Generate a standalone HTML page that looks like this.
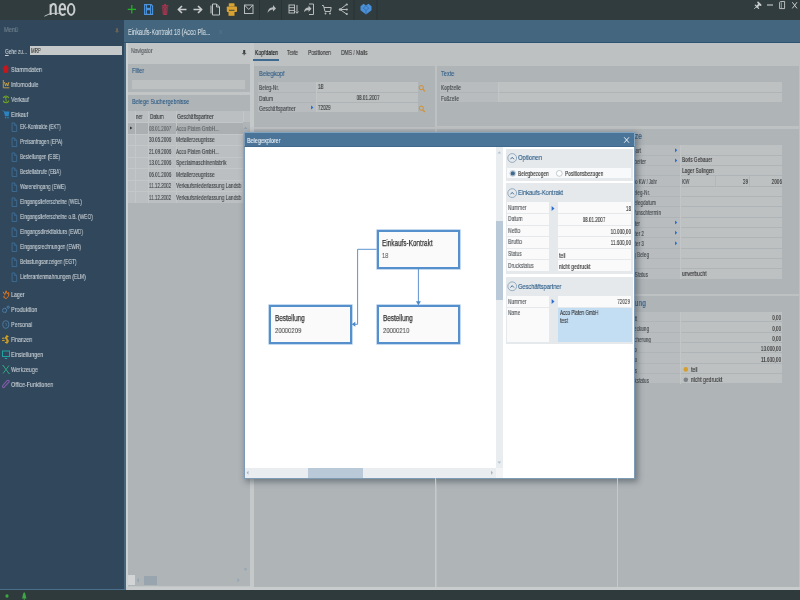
<!DOCTYPE html>
<html><head><meta charset="utf-8">
<style>
*{margin:0;padding:0;box-sizing:border-box}
html,body{width:800px;height:600px;overflow:hidden;background:#bec1c2;font-family:"Liberation Sans",sans-serif;font-size:7px;color:#333}
.a{position:absolute}
.t{position:absolute;white-space:nowrap;height:10px;will-change:transform;-webkit-text-stroke:0.15px currentColor}
svg{position:absolute;overflow:visible}
</style></head><body>
<div class="a" style="left:0px;top:0px;width:800px;height:20px;background:#313c3f;"></div>
<div class="a" style="left:0px;top:20px;width:124px;height:570px;background:#31485c;"></div>
<div class="a" style="left:124px;top:20px;width:676px;height:23px;background:#44677f;"></div>
<div class="a" style="left:124px;top:43px;width:2px;height:546px;background:#44677f;"></div>
<div class="a" style="left:126px;top:43px;width:1.5px;height:544px;background:#cdd0d1;"></div>
<div class="a" style="left:124px;top:42.2px;width:676px;height:1px;background:#2d5272;"></div>
<div class="a" style="left:0px;top:588.7px;width:126px;height:1.3px;background:#4a6f8c;"></div>
<div class="a" style="left:126px;top:586.5px;width:674px;height:3.5px;background:#c9cccd;"></div>
<div class="a" style="left:0px;top:590px;width:800px;height:10px;background:#2f3a3d;"></div>
<svg style="left:0;top:0" width="800" height="600"><g fill="none" stroke="#c9cdcd" stroke-width="2">
<path d="M50.6 15 V4.2 M50.6 7.5 Q51.5 4 53.5 4 Q55.8 4 55.8 7 V15"/>
<path d="M59.6 9.3 H65.2 Q65.2 4 62.4 4 Q59.6 4 59.6 9.5 Q59.6 15 62.6 15 Q64.4 15 65.2 13.6"/>
<ellipse cx="71.1" cy="9.5" rx="3.3" ry="5.4"/>
</g>
<path d="M44.5 16.2 Q50 12.5 56 13.2 Q59 13.6 61.5 13" fill="none" stroke="#c9cdcd" stroke-width="0.9"/></svg>
<svg style="left:0;top:0" width="800" height="600"><g stroke="#22b522" stroke-width="1.2"><path d="M127.7 9.3H136M131.8 5V13.6"/></g>
<g fill="none" stroke="#4d93dc" stroke-width="1.1"><path d="M144.6 4.6H151.2L152.6 6V14.4H144.6Z"/><path d="M146.4 4.6V8.4H150.6V4.6M146.4 14.4V9.6H150.6V14.4"/></g>
<rect x="148.6" y="5.2" width="1" height="2.4" fill="#2a3236"/>
<g fill="none" stroke="#b03550" stroke-width="1"><path d="M162.8 7.2H167.2L166.7 14.5H163.3Z"/><path d="M164.3 8V14M165.7 8V14"/></g>
<g fill="#b03550"><rect x="161.8" y="5.2" width="6.6" height="1.3" rx="0.5"/><rect x="164.2" y="3.9" width="1.8" height="1.6"/></g>
<g fill="none" stroke="#c8cccc" stroke-width="1.7" stroke-linejoin="round"><path d="M186.5 9.5H178.5M182 6L178.3 9.5L182 13"/><path d="M193.5 9.5H201.5M198 6L201.7 9.5L198 13"/></g>
<g fill="none" stroke="#c0c4c4" stroke-width="1"><path d="M212.5 4H216.5L219.5 7V15H212.5Z"/><path d="M211 5.5V13.5"/><path d="M216.5 4V7H219.5"/></g>
<g fill="#d8a332"><rect x="228.8" y="3.2" width="5.7" height="3.3" rx="0.6"/><rect x="226.8" y="6.5" width="10.2" height="5.5" rx="0.8"/><rect x="228.5" y="11.8" width="6" height="4"/></g>
<rect x="229" y="9.8" width="5.5" height="0.9" fill="#313c3f"/>
<g fill="none" stroke="#b8bcbc" stroke-width="1"><rect x="244.5" y="5" width="8.5" height="8.5"/><path d="M244.5 5L248.75 9.5L253 5"/></g>
<rect x="259" y="0" width="1" height="20" fill="#2a3335"/>
<path d="M267.5 13Q268 7.5 273 7.2V5L276 8.5L273 11.5V9.5Q269.5 9.5 267.5 13Z" fill="#b8bcbc"/>
<rect x="281" y="0" width="1" height="20" fill="#2a3335"/>
<g fill="none" stroke="#b8bcbc" stroke-width="1"><rect x="289" y="5" width="5.5" height="8"/><path d="M289 7.7H294.5M289 10.4H294.5"/><path d="M297 5V13M295.5 11.5L297 13.3L298.5 11.5"/></g>
<g fill="none" stroke="#b8bcbc" stroke-width="1"><path d="M309 4H313.5V14.5H309"/></g>
<path d="M304 12Q304.5 7.5 308.5 7.5V5.5L311.5 8.8L308.5 12V10Q305.8 10 304 12Z" fill="#b8bcbc"/>
<g fill="none" stroke="#b8bcbc" stroke-width="1"><path d="M322 5.5H323.5L325 11.5H330.5L331.2 7.5H324"/></g><circle cx="325.5" cy="13.5" r="0.9" fill="#b8bcbc"/><circle cx="330" cy="13.5" r="0.9" fill="#b8bcbc"/>
<g fill="none" stroke="#b8bcbc" stroke-width="1"><path d="M340 9.5L346.5 4.5M340 9.5H346.5M340 9.5L346.5 14"/></g><circle cx="340" cy="9.5" r="1.2" fill="#b8bcbc"/><circle cx="346.8" cy="4.5" r="1.1" fill="#b8bcbc"/><circle cx="346.8" cy="9.5" r="1.1" fill="#b8bcbc"/><circle cx="346.8" cy="14" r="1.1" fill="#b8bcbc"/>
<rect x="353.5" y="0" width="1" height="20" fill="#2a3335"/>
<path d="M360.5 6.3L363.5 3.7L366 5.6L368.5 3.7L371.5 6.3V10.2L366 14.6L360.5 10.2Z" fill="#4a90d8"/>
<path d="M363.2 8.2L366 10.3L368.8 8.2M366 10.3V14.2M366 5.6L363.2 8.2M366 5.6L368.8 8.2" fill="none" stroke="#2d6296" stroke-width="0.6"/>
<rect x="376.5" y="0" width="1" height="20" fill="#2a3335"/>
<g fill="none" stroke="#c8cccc" stroke-linecap="round"><path d="M754.4 8.7L756.7 6.4" stroke-width="0.8"/><path d="M755.3 5.1L758.6 8.4" stroke-width="1.2"/><path d="M756.9 6.7L759.3 4.3" stroke-width="2"/><path d="M758 2.4L760.7 5.1" stroke-width="1.6"/></g>
<g fill="none" stroke="#c8cccc"><path d="M767 5H773" stroke-width="1.1"/><path d="M779.6 2.6Q779.6 1.8 780.6 1.6L784.6 1.4V8.6H779.6Z" stroke-width="0.9"/><path d="M781.4 2.4V8" stroke-width="0.6"/><path d="M792.3 2.2L797 8.4M797 2.2L792.3 8.4" stroke-width="1"/></g></svg>
<div class="t" style="left:3.90px;top:24.80px;font-size:7.5px;color:#6f808e;line-height:10px;transform:scaleX(0.746);transform-origin:left;">Menü</div>
<svg style="left:0;top:0" width="800" height="600"><rect x="116.2" y="28.2" width="1.6" height="3" fill="#7a6a55"/><path d="M115.2 31.4H118.8M117 31.4V33" stroke="#7a6a55" stroke-width="0.7"/></svg>
<div class="t" style="left:4.90px;top:46.50px;font-size:7px;color:#c2c9cf;line-height:10px;transform:scaleX(0.678);transform-origin:left;"><u style="text-decoration-thickness:0.5px;text-underline-offset:1px">G</u>ehe zu...</div>
<div class="a" style="left:29.5px;top:45.5px;width:92px;height:9.8px;background:#c6c9c9;"></div>
<div class="t" style="left:30.50px;top:45.60px;font-size:6.5px;color:#3a3a3a;line-height:10px;transform:scaleX(0.678);transform-origin:left;">MRP</div>
<div class="t" style="left:11.00px;top:64.50px;font-size:7px;color:#c2c9cf;line-height:10px;transform:scaleX(0.781);transform-origin:left;">Stammdaten</div>
<div class="t" style="left:11.00px;top:79.50px;font-size:7px;color:#c2c9cf;line-height:10px;transform:scaleX(0.794);transform-origin:left;">Infomodule</div>
<div class="t" style="left:11.00px;top:94.50px;font-size:7px;color:#c2c9cf;line-height:10px;transform:scaleX(0.758);transform-origin:left;">Verkauf</div>
<div class="t" style="left:11.00px;top:109.50px;font-size:7px;color:#c2c9cf;line-height:10px;transform:scaleX(0.728);transform-origin:left;">Einkauf</div>
<div class="t" style="left:19.60px;top:121.50px;font-size:7px;color:#c2c9cf;line-height:10px;transform:scaleX(0.660);transform-origin:left;">EK-Kontrakte (EKT)</div>
<div class="t" style="left:19.60px;top:136.50px;font-size:7px;color:#c2c9cf;line-height:10px;transform:scaleX(0.667);transform-origin:left;">Preisanfragen (EPA)</div>
<div class="t" style="left:19.60px;top:151.50px;font-size:7px;color:#c2c9cf;line-height:10px;transform:scaleX(0.655);transform-origin:left;">Bestellungen (EBE)</div>
<div class="t" style="left:19.60px;top:166.50px;font-size:7px;color:#c2c9cf;line-height:10px;transform:scaleX(0.664);transform-origin:left;">Bestellabrufe (EBA)</div>
<div class="t" style="left:19.60px;top:181.50px;font-size:7px;color:#c2c9cf;line-height:10px;transform:scaleX(0.675);transform-origin:left;">Wareneingang (EWE)</div>
<div class="t" style="left:19.60px;top:196.50px;font-size:7px;color:#c2c9cf;line-height:10px;transform:scaleX(0.685);transform-origin:left;">Eingangslieferscheine (WEL)</div>
<div class="t" style="left:19.60px;top:211.50px;font-size:7px;color:#c2c9cf;line-height:10px;transform:scaleX(0.685);transform-origin:left;">Eingangslieferscheine o.B. (WEO)</div>
<div class="t" style="left:19.60px;top:226.50px;font-size:7px;color:#c2c9cf;line-height:10px;transform:scaleX(0.695);transform-origin:left;">Eingangsdirektfaktura (EWD)</div>
<div class="t" style="left:19.60px;top:241.50px;font-size:7px;color:#c2c9cf;line-height:10px;transform:scaleX(0.685);transform-origin:left;">Eingangsrechnungen (EWR)</div>
<div class="t" style="left:19.60px;top:256.50px;font-size:7px;color:#c2c9cf;line-height:10px;transform:scaleX(0.671);transform-origin:left;">Belastungsanzeigen (EGT)</div>
<div class="t" style="left:19.60px;top:271.50px;font-size:7px;color:#c2c9cf;line-height:10px;transform:scaleX(0.707);transform-origin:left;">Lieferantenmahnungen (ELM)</div>
<div class="t" style="left:11.00px;top:289.50px;font-size:7px;color:#c2c9cf;line-height:10px;transform:scaleX(0.754);transform-origin:left;">Lager</div>
<div class="t" style="left:11.00px;top:304.50px;font-size:7px;color:#c2c9cf;line-height:10px;transform:scaleX(0.789);transform-origin:left;">Produktion</div>
<div class="t" style="left:11.00px;top:319.50px;font-size:7px;color:#c2c9cf;line-height:10px;transform:scaleX(0.760);transform-origin:left;">Personal</div>
<div class="t" style="left:11.00px;top:334.50px;font-size:7px;color:#c2c9cf;line-height:10px;transform:scaleX(0.729);transform-origin:left;">Finanzen</div>
<div class="t" style="left:11.00px;top:349.50px;font-size:7px;color:#c2c9cf;line-height:10px;transform:scaleX(0.761);transform-origin:left;">Einstellungen</div>
<div class="t" style="left:11.00px;top:364.50px;font-size:7px;color:#c2c9cf;line-height:10px;transform:scaleX(0.760);transform-origin:left;">Werkzeuge</div>
<div class="t" style="left:11.00px;top:379.50px;font-size:7px;color:#c2c9cf;line-height:10px;transform:scaleX(0.766);transform-origin:left;">Office-Funktionen</div>
<svg style="left:0;top:0" width="800" height="600"><path d="M5.8 64.5L2.3 68.5H3.5V72.8H8.2V68.5H9.3Z" fill="#c4161c"/>
<g fill="none" stroke="#c9a246" stroke-width="0.9"><path d="M3.3 80V87.8H9.3"/><path d="M4.5 82L5.6 86L6.7 83L7.8 86L8.9 82"/></g>
<g fill="none" stroke="#74a524" stroke-width="1.1"><path d="M3.2 98.2A2.9 2.9 0 0 1 8.8 98.2"/><path d="M3.2 100.6A2.9 2.9 0 0 0 8.8 100.6"/><path d="M4.5 97.3H7.3M5.6 97.3L6.3 101.6" stroke-width="0.9"/></g>
<path d="M2.8 110.3L4.4 112" stroke="#2a84c4" stroke-width="0.9"/><path d="M3.9 111.6H9.3L8.6 116.2H5Z" fill="#2a84c4"/><circle cx="5.6" cy="117.8" r="0.8" fill="#2a84c4"/><circle cx="8" cy="117.8" r="0.8" fill="#2a84c4"/>
<path d="M12.1 122.9H14.4L16.7 125.5V131.5H12.1Z" fill="none" stroke="#3f6f98" stroke-width="0.85"/><path d="M14.4 122.9V125.5H16.7" fill="none" stroke="#3f6f98" stroke-width="0.7"/><path d="M12.1 137.9H14.4L16.7 140.5V146.5H12.1Z" fill="none" stroke="#3f6f98" stroke-width="0.85"/><path d="M14.4 137.9V140.5H16.7" fill="none" stroke="#3f6f98" stroke-width="0.7"/><path d="M12.1 152.9H14.4L16.7 155.5V161.5H12.1Z" fill="none" stroke="#3f6f98" stroke-width="0.85"/><path d="M14.4 152.9V155.5H16.7" fill="none" stroke="#3f6f98" stroke-width="0.7"/><path d="M12.1 167.9H14.4L16.7 170.5V176.5H12.1Z" fill="none" stroke="#3f6f98" stroke-width="0.85"/><path d="M14.4 167.9V170.5H16.7" fill="none" stroke="#3f6f98" stroke-width="0.7"/><path d="M12.1 182.9H14.4L16.7 185.5V191.5H12.1Z" fill="none" stroke="#3f6f98" stroke-width="0.85"/><path d="M14.4 182.9V185.5H16.7" fill="none" stroke="#3f6f98" stroke-width="0.7"/><path d="M12.1 197.9H14.4L16.7 200.5V206.5H12.1Z" fill="none" stroke="#3f6f98" stroke-width="0.85"/><path d="M14.4 197.9V200.5H16.7" fill="none" stroke="#3f6f98" stroke-width="0.7"/><path d="M12.1 212.9H14.4L16.7 215.5V221.5H12.1Z" fill="none" stroke="#3f6f98" stroke-width="0.85"/><path d="M14.4 212.9V215.5H16.7" fill="none" stroke="#3f6f98" stroke-width="0.7"/><path d="M12.1 227.9H14.4L16.7 230.5V236.5H12.1Z" fill="none" stroke="#3f6f98" stroke-width="0.85"/><path d="M14.4 227.9V230.5H16.7" fill="none" stroke="#3f6f98" stroke-width="0.7"/><path d="M12.1 242.9H14.4L16.7 245.5V251.5H12.1Z" fill="none" stroke="#3f6f98" stroke-width="0.85"/><path d="M14.4 242.9V245.5H16.7" fill="none" stroke="#3f6f98" stroke-width="0.7"/><path d="M12.1 257.9H14.4L16.7 260.5V266.5H12.1Z" fill="none" stroke="#3f6f98" stroke-width="0.85"/><path d="M14.4 257.9V260.5H16.7" fill="none" stroke="#3f6f98" stroke-width="0.7"/><path d="M12.1 272.9H14.4L16.7 275.5V281.5H12.1Z" fill="none" stroke="#3f6f98" stroke-width="0.85"/><path d="M14.4 272.9V275.5H16.7" fill="none" stroke="#3f6f98" stroke-width="0.7"/>
<g fill="none" stroke="#e0741c" stroke-width="1" stroke-linejoin="round"><path d="M3 291.8L4.8 294.6L6.2 290.8L7.2 293.8L8.8 292.5L8.6 296.2L6 298.6L3.6 297.2L4.6 295.6"/></g>
<g fill="none" stroke="#4f84b4" stroke-width="1.1" stroke-dasharray="1 0.45"><circle cx="4.6" cy="310.4" r="2"/></g><g fill="none" stroke="#4f84b4" stroke-width="0.9"><circle cx="8.2" cy="307.2" r="1.1"/></g>
<ellipse cx="5.8" cy="324.5" rx="3.1" ry="3.9" fill="none" stroke="#4e7ca4" stroke-width="0.9"/><path d="M5.3 323.5H6.3V326" fill="none" stroke="#4e7ca4" stroke-width="0.6"/>
<g fill="none" stroke="#d9a322" stroke-width="1.1"><path d="M8.5 336.5Q6.8 335.8 5.8 337Q5 338.3 6.8 339.3Q8.8 340.4 8 341.8Q7 343 5 342.3M6.9 335V343.8"/><path d="M2.2 338.5Q3.5 337.5 4.5 338.5M2.2 340.8Q3.5 339.8 4.5 340.8"/></g>
<g fill="none" stroke="#22a3a3" stroke-width="1"><rect x="2.5" y="351" width="7" height="5.5"/><path d="M4.8 358.5H7.2"/></g>
<g fill="none" stroke="#2ea382" stroke-width="1"><path d="M3 365.5L9 373.5M9 365.5L3 373.5M2.5 365L4 366.5M8.2 372.5L9.6 374"/></g>
<path d="M3.5 387.8L8.5 382.5Q9.8 381.2 8.8 380.5Q7.8 379.8 6.8 380.9L2.9 385.3Q2 386.5 2.8 387.3Q3.6 388 4.6 387" fill="none" stroke="#7d5ba6" stroke-width="1.1"/></svg>
<div class="t" style="left:127.75px;top:26.50px;font-size:8.5px;color:#cdd6dd;line-height:10px;transform:scaleX(0.661);transform-origin:left;">Einkaufs-Kontrakt 18 (Acco Pla...</div>
<div class="t" style="left:218.80px;top:27.00px;font-size:6.5px;color:#55758f;line-height:10px;">x</div>
<div class="a" style="left:127.5px;top:43px;width:122px;height:544px;background:#c2c5c6;"></div>
<div class="t" style="left:130.75px;top:45.80px;font-size:7px;color:#5a5f63;line-height:10px;transform:scaleX(0.717);transform-origin:left;">Navigator</div>
<svg style="left:0;top:0" width="800" height="600"><rect x="243.2" y="50" width="2" height="3.4" fill="#3a3e41"/><path d="M242.2 53.6H246.2M244.2 53.6V55.3" stroke="#3a3e41" stroke-width="0.8"/></svg>
<div class="a" style="left:127.5px;top:64px;width:122px;height:27.5px;background:#afb4b7;"></div>
<div class="t" style="left:132.00px;top:65.80px;font-size:7.5px;color:#2f5d86;line-height:10px;transform:scaleX(0.720);transform-origin:left;">Filter</div>
<div class="a" style="left:131.8px;top:79.8px;width:113.5px;height:9.2px;background:#bec1c2;"></div>
<div class="a" style="left:127.5px;top:95px;width:122px;height:491px;background:#afb4b7;"></div>
<div class="t" style="left:131.80px;top:97.00px;font-size:7.5px;color:#2f5d86;line-height:10px;transform:scaleX(0.722);transform-origin:left;">Belege Suchergebnisse</div>
<div class="a" style="left:127.5px;top:111px;width:122px;height:11px;background:#bcbfc1;"></div>
<div class="a" style="left:127.5px;top:122px;width:115px;height:80.5px;background:#bcbfc1;"></div>
<div class="a" style="left:127.5px;top:122px;width:115px;height:11.5px;background:#abafb1;"></div>
<div class="a" style="left:134.5px;top:111px;width:1px;height:91.5px;background:#c4c7c8;"></div>
<div class="a" style="left:147.5px;top:111px;width:1px;height:91.5px;background:#c4c7c8;"></div>
<div class="a" style="left:175.5px;top:111px;width:1px;height:91.5px;background:#c4c7c8;"></div>
<div class="a" style="left:242.5px;top:111px;width:1px;height:11px;background:#c4c7c8;"></div>
<div class="a" style="left:127.5px;top:122.0px;width:115px;height:0.8px;background:#c4c7c8;"></div>
<div class="a" style="left:127.5px;top:133.5px;width:115px;height:0.8px;background:#c4c7c8;"></div>
<div class="a" style="left:127.5px;top:145.0px;width:115px;height:0.8px;background:#c4c7c8;"></div>
<div class="a" style="left:127.5px;top:156.5px;width:115px;height:0.8px;background:#c4c7c8;"></div>
<div class="a" style="left:127.5px;top:168.0px;width:115px;height:0.8px;background:#c4c7c8;"></div>
<div class="a" style="left:127.5px;top:179.5px;width:115px;height:0.8px;background:#c4c7c8;"></div>
<div class="a" style="left:127.5px;top:191.0px;width:115px;height:0.8px;background:#c4c7c8;"></div>
<div class="t" style="left:135.50px;top:112.30px;font-size:6.5px;color:#3a3d40;line-height:10px;transform:scaleX(0.691);transform-origin:left;">ner</div>
<div class="t" style="left:149.80px;top:112.30px;font-size:6.5px;color:#3a3d40;line-height:10px;transform:scaleX(0.715);transform-origin:left;">Datum</div>
<div class="t" style="left:176.80px;top:112.30px;font-size:6.5px;color:#3a3d40;line-height:10px;transform:scaleX(0.734);transform-origin:left;">Geschäftspartner</div>
<svg style="left:0;top:0" width="800" height="600"><path d="M130 126.5L132.5 128L130 129.5Z" fill="#333"/><path d="M243.8 129L245.5 126.8L247.2 129Z" fill="#8fa2b2"/></svg>
<div class="t" style="left:148.80px;top:123.60px;font-size:6.5px;color:#62676a;line-height:10px;transform:scaleX(0.682);transform-origin:left;">08.01.2007</div>
<div class="t" style="left:176.30px;top:123.60px;font-size:6.5px;color:#62676a;line-height:10px;transform:scaleX(0.707);transform-origin:left;">Acco Platen GmbH...</div>
<div class="t" style="left:148.80px;top:135.10px;font-size:6.5px;color:#45494c;line-height:10px;transform:scaleX(0.682);transform-origin:left;">30.05.2006</div>
<div class="t" style="left:176.30px;top:135.10px;font-size:6.5px;color:#45494c;line-height:10px;transform:scaleX(0.739);transform-origin:left;">Metallerzeugnisse</div>
<div class="t" style="left:148.80px;top:146.60px;font-size:6.5px;color:#45494c;line-height:10px;transform:scaleX(0.682);transform-origin:left;">21.09.2006</div>
<div class="t" style="left:176.30px;top:146.60px;font-size:6.5px;color:#45494c;line-height:10px;transform:scaleX(0.707);transform-origin:left;">Acco Platen GmbH...</div>
<div class="t" style="left:148.80px;top:158.10px;font-size:6.5px;color:#45494c;line-height:10px;transform:scaleX(0.682);transform-origin:left;">13.01.2006</div>
<div class="t" style="left:176.30px;top:158.10px;font-size:6.5px;color:#45494c;line-height:10px;transform:scaleX(0.733);transform-origin:left;">Spezialmaschinenfabrik</div>
<div class="t" style="left:148.80px;top:169.60px;font-size:6.5px;color:#45494c;line-height:10px;transform:scaleX(0.682);transform-origin:left;">06.01.2006</div>
<div class="t" style="left:176.30px;top:169.60px;font-size:6.5px;color:#45494c;line-height:10px;transform:scaleX(0.739);transform-origin:left;">Metallerzeugnisse</div>
<div class="t" style="left:148.80px;top:181.10px;font-size:6.5px;color:#45494c;line-height:10px;transform:scaleX(0.692);transform-origin:left;">11.12.2002</div>
<div class="t" style="left:176.30px;top:181.10px;font-size:6.5px;color:#45494c;line-height:10px;transform:scaleX(0.734);transform-origin:left;">Verkaufsniederlassung Landsb</div>
<div class="t" style="left:148.80px;top:192.60px;font-size:6.5px;color:#45494c;line-height:10px;transform:scaleX(0.692);transform-origin:left;">11.12.2002</div>
<div class="t" style="left:176.30px;top:192.60px;font-size:6.5px;color:#45494c;line-height:10px;transform:scaleX(0.734);transform-origin:left;">Verkaufsniederlassung Landsb</div>
<svg style="left:0;top:0" width="800" height="600"><path d="M243.8 568.5L245.5 570.8L247.2 568.5Z" fill="#8fa2b2"/><path d="M138.8 578L137 580.3L138.8 582.6Z" fill="#8fa2b2"/><path d="M237.5 578L239.3 580.3L237.5 582.6Z" fill="#8fa2b2"/></svg>
<div class="a" style="left:127.5px;top:575px;width:7px;height:10px;background:#d2d5d6;"></div>
<div class="a" style="left:144px;top:576px;width:12.8px;height:8.5px;background:#99a5ae;"></div>
<div class="a" style="left:249.5px;top:43px;width:4.5px;height:544px;background:#c6c9ca;"></div>
<div class="t" style="left:254.60px;top:47.50px;font-size:7px;color:#1e2224;line-height:10px;transform:scaleX(0.724);transform-origin:left;-webkit-text-stroke:0.2px #1e2224;">Kopfdaten</div>
<div class="a" style="left:253px;top:59.2px;width:26px;height:1.8px;background:#3e6a90;"></div>
<div class="t" style="left:287.00px;top:47.50px;font-size:7px;color:#3a3a3a;line-height:10px;transform:scaleX(0.657);transform-origin:left;">Texte</div>
<div class="t" style="left:308.00px;top:47.50px;font-size:7px;color:#3a3a3a;line-height:10px;transform:scaleX(0.703);transform-origin:left;">Positionen</div>
<div class="t" style="left:341.00px;top:47.50px;font-size:7px;color:#3a3a3a;line-height:10px;transform:scaleX(0.702);transform-origin:left;">DMS / Mails</div>
<div class="a" style="left:254px;top:66px;width:181px;height:61px;background:#afb4b7;"></div>
<div class="a" style="left:436.5px;top:66px;width:362px;height:60px;background:#afb4b7;"></div>
<div class="a" style="left:254px;top:129.3px;width:181px;height:165px;background:#afb4b7;"></div>
<div class="a" style="left:436.5px;top:129.3px;width:181px;height:165px;background:#afb4b7;"></div>
<div class="a" style="left:618px;top:128.6px;width:181px;height:165.4px;background:#afb4b7;"></div>
<div class="a" style="left:254px;top:296px;width:181px;height:290.5px;background:#afb4b7;"></div>
<div class="a" style="left:436.5px;top:296px;width:181px;height:290.5px;background:#afb4b7;"></div>
<div class="a" style="left:618px;top:296px;width:181px;height:290.5px;background:#afb4b7;"></div>
<div class="t" style="left:258.50px;top:68.80px;font-size:7.5px;color:#2f5d86;line-height:10px;transform:scaleX(0.764);transform-origin:left;">Belegkopf</div>
<div class="a" style="left:258px;top:82.3px;width:58px;height:9.4px;background:#b8bcbe;"></div>
<div class="a" style="left:316.5px;top:82.3px;width:101px;height:9.4px;background:#bdc1c2;"></div>
<div class="t" style="left:259.00px;top:83.30px;font-size:6.5px;color:#474c50;line-height:10px;transform:scaleX(0.738);transform-origin:left;">Beleg-Nr.</div>
<div class="t" style="left:317.50px;top:82.20px;font-size:6.5px;color:#3a3a3a;line-height:10px;transform:scaleX(0.760);transform-origin:left;">18</div>
<div class="a" style="left:258px;top:92.55px;width:58px;height:9.4px;background:#b8bcbe;"></div>
<div class="a" style="left:316.5px;top:92.55px;width:101px;height:9.4px;background:#bdc1c2;"></div>
<div class="t" style="left:259.00px;top:93.55px;font-size:6.5px;color:#474c50;line-height:10px;transform:scaleX(0.731);transform-origin:left;">Datum</div>
<div class="t" style="left:217.50px;top:93.15px;font-size:6.5px;color:#3a3a3a;line-height:10px;transform:scaleX(0.707);transform-origin:center;width:300px;text-align:center;">08.01.2007</div>
<div class="a" style="left:258px;top:102.8px;width:58px;height:9.4px;background:#b8bcbe;"></div>
<div class="a" style="left:316.5px;top:102.8px;width:101px;height:9.4px;background:#bdc1c2;"></div>
<div class="t" style="left:259.00px;top:103.80px;font-size:6.5px;color:#474c50;line-height:10px;transform:scaleX(0.732);transform-origin:left;">Geschäftspartner</div>
<div class="t" style="left:317.50px;top:102.70px;font-size:6.5px;color:#3a3a3a;line-height:10px;transform:scaleX(0.691);transform-origin:left;">72029</div>
<svg style="left:0;top:0" width="800" height="600"><g fill="none" stroke="#d4902e" stroke-width="1"><circle cx="421.3" cy="87.6" r="2.1"/><path d="M422.8 89.2L424.8 91.4" stroke-width="1.2"/><circle cx="421.3" cy="108.2" r="2.1"/><path d="M422.8 109.8L424.8 112" stroke-width="1.2"/></g>
<path d="M311 105.5L313.5 107.5L311 109.5Z" fill="#2a6fd0"/></svg>
<div class="t" style="left:440.50px;top:68.80px;font-size:7.5px;color:#2f5d86;line-height:10px;transform:scaleX(0.739);transform-origin:left;">Texte</div>
<div class="a" style="left:440px;top:82.3px;width:58px;height:9.4px;background:#b8bcbe;"></div>
<div class="a" style="left:498.5px;top:82.3px;width:283.2px;height:9.4px;background:#bdc1c2;"></div>
<div class="t" style="left:441.00px;top:83.30px;font-size:6.5px;color:#474c50;line-height:10px;transform:scaleX(0.748);transform-origin:left;">Kopfzeile</div>
<div class="a" style="left:440px;top:92.55px;width:58px;height:9.4px;background:#b8bcbe;"></div>
<div class="a" style="left:498.5px;top:92.55px;width:283.2px;height:9.4px;background:#bdc1c2;"></div>
<div class="t" style="left:441.00px;top:93.55px;font-size:6.5px;color:#474c50;line-height:10px;transform:scaleX(0.722);transform-origin:left;">Fußzeile</div>
<div class="t" style="left:342.30px;top:131.00px;font-size:8.5px;color:#2f5d86;line-height:10px;transform:scaleX(0.800);transform-origin:right;width:300px;text-align:right;">Zusätze</div>
<div class="a" style="left:622px;top:145.4px;width:58.5px;height:9.3px;background:#b8bcbe;"></div>
<div class="a" style="left:680.5px;top:145.4px;width:101.3px;height:9.3px;background:#bdc1c2;"></div>
<div class="t" style="left:340.75px;top:146.20px;font-size:6.5px;color:#474c50;line-height:10px;transform:scaleX(0.720);transform-origin:right;width:300px;text-align:right;">Belegart</div>
<svg style="left:0;top:0" width="800" height="600"><path d="M675 148.20000000000002L677.3 150.20000000000002L675 152.20000000000002Z" fill="#2a6fd0"/></svg>
<div class="a" style="left:622px;top:155.73000000000002px;width:58.5px;height:9.3px;background:#b8bcbe;"></div>
<div class="a" style="left:680.5px;top:155.73000000000002px;width:101.3px;height:9.3px;background:#bdc1c2;"></div>
<div class="t" style="left:345.50px;top:156.53px;font-size:6.5px;color:#474c50;line-height:10px;transform:scaleX(0.720);transform-origin:right;width:300px;text-align:right;">Bearbeiter</div>
<svg style="left:0;top:0" width="800" height="600"><path d="M675 158.53000000000003L677.3 160.53000000000003L675 162.53000000000003Z" fill="#2a6fd0"/></svg>
<div class="a" style="left:622px;top:166.06px;width:58.5px;height:9.3px;background:#b8bcbe;"></div>
<div class="a" style="left:680.5px;top:166.06px;width:101.3px;height:9.3px;background:#bdc1c2;"></div>
<div class="t" style="left:328.00px;top:166.86px;font-size:6.5px;color:#474c50;line-height:10px;transform:scaleX(0.720);transform-origin:right;width:300px;text-align:right;">Lager</div>
<div class="a" style="left:622px;top:176.39000000000001px;width:58.5px;height:9.3px;background:#b8bcbe;"></div>
<div class="a" style="left:680.5px;top:176.39000000000001px;width:101.3px;height:9.3px;background:#bdc1c2;"></div>
<div class="t" style="left:357.00px;top:177.19px;font-size:6.5px;color:#474c50;line-height:10px;transform:scaleX(0.640);transform-origin:right;width:300px;text-align:right;">Ultimo KW / Jahr</div>
<div class="a" style="left:622px;top:186.72px;width:58.5px;height:9.3px;background:#b8bcbe;"></div>
<div class="a" style="left:680.5px;top:186.72px;width:101.3px;height:9.3px;background:#bdc1c2;"></div>
<div class="t" style="left:350.00px;top:187.52px;font-size:6.5px;color:#474c50;line-height:10px;transform:scaleX(0.720);transform-origin:right;width:300px;text-align:right;">Fremd-Beleg-Nr.</div>
<div class="a" style="left:622px;top:197.05px;width:58.5px;height:9.3px;background:#b8bcbe;"></div>
<div class="a" style="left:680.5px;top:197.05px;width:101.3px;height:9.3px;background:#bdc1c2;"></div>
<div class="t" style="left:355.50px;top:197.85px;font-size:6.5px;color:#474c50;line-height:10px;transform:scaleX(0.720);transform-origin:right;width:300px;text-align:right;">Fremd-Belegdatum</div>
<div class="a" style="left:622px;top:207.38px;width:58.5px;height:9.3px;background:#b8bcbe;"></div>
<div class="a" style="left:680.5px;top:207.38px;width:101.3px;height:9.3px;background:#bdc1c2;"></div>
<div class="t" style="left:361.25px;top:208.18px;font-size:6.5px;color:#474c50;line-height:10px;transform:scaleX(0.720);transform-origin:right;width:300px;text-align:right;">Wunschtermin</div>
<div class="a" style="left:622px;top:217.71px;width:58.5px;height:9.3px;background:#b8bcbe;"></div>
<div class="a" style="left:680.5px;top:217.71px;width:101.3px;height:9.3px;background:#bdc1c2;"></div>
<div class="t" style="left:340.00px;top:218.51px;font-size:6.5px;color:#474c50;line-height:10px;transform:scaleX(0.720);transform-origin:right;width:300px;text-align:right;">Vertreter</div>
<svg style="left:0;top:0" width="800" height="600"><path d="M675 220.51000000000002L677.3 222.51000000000002L675 224.51000000000002Z" fill="#2a6fd0"/></svg>
<div class="a" style="left:622px;top:228.04000000000002px;width:58.5px;height:9.3px;background:#b8bcbe;"></div>
<div class="a" style="left:680.5px;top:228.04000000000002px;width:101.3px;height:9.3px;background:#bdc1c2;"></div>
<div class="t" style="left:344.00px;top:228.84px;font-size:6.5px;color:#474c50;line-height:10px;transform:scaleX(0.720);transform-origin:right;width:300px;text-align:right;">Vertreter 2</div>
<svg style="left:0;top:0" width="800" height="600"><path d="M675 230.84000000000003L677.3 232.84000000000003L675 234.84000000000003Z" fill="#2a6fd0"/></svg>
<div class="a" style="left:622px;top:238.37px;width:58.5px;height:9.3px;background:#b8bcbe;"></div>
<div class="a" style="left:680.5px;top:238.37px;width:101.3px;height:9.3px;background:#bdc1c2;"></div>
<div class="t" style="left:344.00px;top:239.17px;font-size:6.5px;color:#474c50;line-height:10px;transform:scaleX(0.720);transform-origin:right;width:300px;text-align:right;">Vertreter 3</div>
<svg style="left:0;top:0" width="800" height="600"><path d="M675 241.17000000000002L677.3 243.17000000000002L675 245.17000000000002Z" fill="#2a6fd0"/></svg>
<div class="a" style="left:622px;top:248.7px;width:58.5px;height:9.3px;background:#b8bcbe;"></div>
<div class="a" style="left:680.5px;top:248.7px;width:101.3px;height:9.3px;background:#bdc1c2;"></div>
<div class="t" style="left:349.00px;top:249.50px;font-size:6.5px;color:#474c50;line-height:10px;transform:scaleX(0.720);transform-origin:right;width:300px;text-align:right;">Ursprung Beleg</div>
<div class="a" style="left:622px;top:259.03px;width:58.5px;height:9.3px;background:#b8bcbe;"></div>
<div class="a" style="left:680.5px;top:259.03px;width:101.3px;height:9.3px;background:#bdc1c2;"></div>
<div class="a" style="left:622px;top:269.36px;width:58.5px;height:9.3px;background:#b8bcbe;"></div>
<div class="a" style="left:680.5px;top:269.36px;width:101.3px;height:9.3px;background:#bdc1c2;"></div>
<div class="t" style="left:347.50px;top:270.16px;font-size:6.5px;color:#474c50;line-height:10px;transform:scaleX(0.720);transform-origin:right;width:300px;text-align:right;">Buchung Status</div>
<div class="t" style="left:681.90px;top:155.43px;font-size:6.5px;color:#3a3a3a;line-height:10px;transform:scaleX(0.720);transform-origin:left;">Boris Gebauer</div>
<div class="t" style="left:681.90px;top:165.76px;font-size:6.5px;color:#3a3a3a;line-height:10px;transform:scaleX(0.732);transform-origin:left;">Lager Solingen</div>
<div class="a" style="left:714.5px;top:176.39000000000001px;width:0.8px;height:9.3px;background:#b3b7b9;"></div>
<div class="a" style="left:748.5px;top:176.39000000000001px;width:0.8px;height:9.3px;background:#b3b7b9;"></div>
<div class="t" style="left:681.90px;top:176.89px;font-size:6.5px;color:#474c50;line-height:10px;transform:scaleX(0.715);transform-origin:left;">KW</div>
<div class="t" style="left:447.60px;top:176.89px;font-size:6.5px;color:#3a3a3a;line-height:10px;transform:scaleX(0.691);transform-origin:right;width:300px;text-align:right;">39</div>
<div class="t" style="left:481.60px;top:176.89px;font-size:6.5px;color:#3a3a3a;line-height:10px;transform:scaleX(0.726);transform-origin:right;width:300px;text-align:right;">2006</div>
<div class="t" style="left:681.80px;top:269.16px;font-size:6.5px;color:#3a3a3a;line-height:10px;transform:scaleX(0.765);transform-origin:left;">unverbucht</div>
<div class="t" style="left:346.00px;top:298.30px;font-size:8.5px;color:#2f5d86;line-height:10px;transform:scaleX(0.800);transform-origin:right;width:300px;text-align:right;">Kalkulierung</div>
<div class="a" style="left:622px;top:311.9px;width:58.5px;height:9.4px;background:#b8bcbe;"></div>
<div class="a" style="left:680.5px;top:311.9px;width:101.3px;height:9.4px;background:#bdc1c2;"></div>
<div class="t" style="left:336.50px;top:313.90px;font-size:6.5px;color:#474c50;line-height:10px;transform:scaleX(0.720);transform-origin:right;width:300px;text-align:right;">Rabatt</div>
<div class="t" style="left:481.25px;top:313.40px;font-size:6.5px;color:#3a3a3a;line-height:10px;transform:scaleX(0.691);transform-origin:right;width:300px;text-align:right;">0,00</div>
<div class="a" style="left:622px;top:322.25px;width:58.5px;height:9.4px;background:#b8bcbe;"></div>
<div class="a" style="left:680.5px;top:322.25px;width:101.3px;height:9.4px;background:#bdc1c2;"></div>
<div class="t" style="left:348.75px;top:324.25px;font-size:6.5px;color:#474c50;line-height:10px;transform:scaleX(0.720);transform-origin:right;width:300px;text-align:right;">Deckung</div>
<div class="t" style="left:481.25px;top:323.75px;font-size:6.5px;color:#3a3a3a;line-height:10px;transform:scaleX(0.691);transform-origin:right;width:300px;text-align:right;">0,00</div>
<div class="a" style="left:622px;top:332.59999999999997px;width:58.5px;height:9.4px;background:#b8bcbe;"></div>
<div class="a" style="left:680.5px;top:332.59999999999997px;width:101.3px;height:9.4px;background:#bdc1c2;"></div>
<div class="t" style="left:351.25px;top:334.60px;font-size:6.5px;color:#474c50;line-height:10px;transform:scaleX(0.720);transform-origin:right;width:300px;text-align:right;">Sicherung</div>
<div class="t" style="left:481.25px;top:334.10px;font-size:6.5px;color:#3a3a3a;line-height:10px;transform:scaleX(0.691);transform-origin:right;width:300px;text-align:right;">0,00</div>
<div class="a" style="left:622px;top:342.95px;width:58.5px;height:9.4px;background:#b8bcbe;"></div>
<div class="a" style="left:680.5px;top:342.95px;width:101.3px;height:9.4px;background:#bdc1c2;"></div>
<div class="t" style="left:337.00px;top:344.95px;font-size:6.5px;color:#474c50;line-height:10px;transform:scaleX(0.720);transform-origin:right;width:300px;text-align:right;">Netto</div>
<div class="t" style="left:481.25px;top:344.45px;font-size:6.5px;color:#3a3a3a;line-height:10px;transform:scaleX(0.692);transform-origin:right;width:300px;text-align:right;">10.000,00</div>
<div class="a" style="left:622px;top:353.29999999999995px;width:58.5px;height:9.4px;background:#b8bcbe;"></div>
<div class="a" style="left:680.5px;top:353.29999999999995px;width:101.3px;height:9.4px;background:#bdc1c2;"></div>
<div class="t" style="left:337.00px;top:355.30px;font-size:6.5px;color:#474c50;line-height:10px;transform:scaleX(0.720);transform-origin:right;width:300px;text-align:right;">Brutto</div>
<div class="t" style="left:481.25px;top:354.80px;font-size:6.5px;color:#3a3a3a;line-height:10px;transform:scaleX(0.703);transform-origin:right;width:300px;text-align:right;">11.600,00</div>
<div class="a" style="left:622px;top:363.65px;width:58.5px;height:9.4px;background:#b8bcbe;"></div>
<div class="a" style="left:680.5px;top:363.65px;width:101.3px;height:9.4px;background:#bdc1c2;"></div>
<div class="t" style="left:337.00px;top:365.65px;font-size:6.5px;color:#474c50;line-height:10px;transform:scaleX(0.720);transform-origin:right;width:300px;text-align:right;">Status</div>
<div class="a" style="left:622px;top:374.0px;width:58.5px;height:9.4px;background:#b8bcbe;"></div>
<div class="a" style="left:680.5px;top:374.0px;width:101.3px;height:9.4px;background:#bdc1c2;"></div>
<div class="t" style="left:348.75px;top:376.00px;font-size:6.5px;color:#474c50;line-height:10px;transform:scaleX(0.720);transform-origin:right;width:300px;text-align:right;">Druckstatus</div>
<svg style="left:0;top:0" width="800" height="600"><circle cx="685.8" cy="369.4" r="2.3" fill="#d59f2d"/><circle cx="685.8" cy="379.8" r="2.3" fill="#7d8286"/></svg>
<div class="t" style="left:690.50px;top:364.80px;font-size:6.5px;color:#3a3a3a;line-height:10px;transform:scaleX(0.782);transform-origin:left;">teil</div>
<div class="t" style="left:690.50px;top:375.30px;font-size:6.5px;color:#3a3a3a;line-height:10px;transform:scaleX(0.772);transform-origin:left;">nicht gedruckt</div>
<div class="a" style="left:680px;top:311.9px;width:0.9px;height:72.4px;background:#c3c6c7;"></div>
<div class="a" style="left:680px;top:145.4px;width:0.9px;height:133.7px;background:#c3c6c7;"></div>
<div class="a" style="left:316px;top:82.3px;width:0.9px;height:30.2px;background:#c3c6c7;"></div>
<div class="a" style="left:498px;top:82.3px;width:0.9px;height:20px;background:#c3c6c7;"></div>
<div class="a" style="left:244px;top:132px;width:390.5px;height:346.5px;box-shadow:2px 2px 6px 1px rgba(40,50,60,0.45)"></div>
<div class="a" style="left:244px;top:132px;width:390.5px;height:346.5px;background:#ffffff;border:1px solid #7d9bb5;"></div>
<div class="a" style="left:244px;top:132px;width:390.5px;height:14.8px;background:#4a7599;border-top:1.6px solid #80a4c2;border-left:1px solid #7d9bb5;border-right:1.2px solid #86a6c2;border-bottom:0.6px solid #3f6a8e;"></div>
<div class="t" style="left:247.25px;top:135.60px;font-size:7.5px;color:#e6edf2;line-height:10px;transform:scaleX(0.724);transform-origin:left;">Belegexplorer</div>
<svg style="left:0;top:0" width="800" height="600"><path d="M624.2 137.3L629 142.7M629 137.3L624.2 142.7" stroke="#f2f5f7" stroke-width="0.95"/></svg>
<div class="a" style="left:496px;top:146.8px;width:6.6px;height:321.2px;background:#e9edf0;"></div>
<div class="a" style="left:496px;top:221px;width:6.6px;height:79px;background:#b9c9d7;"></div>
<div class="a" style="left:245px;top:468px;width:251px;height:9.5px;background:#e9edf0;"></div>
<div class="a" style="left:307.5px;top:468px;width:55.2px;height:9.5px;background:#b9c9d7;"></div>
<div class="a" style="left:496px;top:468px;width:6.6px;height:9.5px;background:#f2f4f6;"></div>
<svg style="left:0;top:0" width="800" height="600"><path d="M497.5 153.5L499.3 151.3L501.1 153.5Z" fill="#b3c3d1"/>
<path d="M497.5 461.5L499.3 463.7L501.1 461.5Z" fill="#b3c3d1"/>
<path d="M248.5 470.8L246.5 472.75L248.5 474.7Z" fill="#a8b6c2"/>
<path d="M491 470.8L493 472.75L491 474.7Z" fill="#a8b6c2"/></svg>
<div class="a" style="left:376.6px;top:229.8px;width:83.69999999999999px;height:39.0px;background:#fafafa;border:2px solid #5590cc;box-shadow:0 0 0 0.6px #9cc0e4;"></div>
<div class="t" style="left:382.40px;top:238.00px;font-size:8.5px;color:#333;line-height:10px;transform:scaleX(0.753);transform-origin:left;-webkit-text-stroke:0.25px #333;">Einkaufs-Kontrakt</div>
<div class="t" style="left:382.40px;top:251.10px;font-size:8px;color:#555;line-height:10px;transform:scaleX(0.696);transform-origin:left;">18</div>
<div class="a" style="left:268.7px;top:305px;width:83.19999999999999px;height:38.80000000000001px;background:#fafafa;border:2px solid #5590cc;box-shadow:0 0 0 0.6px #9cc0e4;"></div>
<div class="t" style="left:274.50px;top:313.20px;font-size:8.5px;color:#333;line-height:10px;transform:scaleX(0.748);transform-origin:left;-webkit-text-stroke:0.25px #333;">Bestellung</div>
<div class="t" style="left:274.50px;top:326.30px;font-size:8px;color:#555;line-height:10px;transform:scaleX(0.736);transform-origin:left;">20000209</div>
<div class="a" style="left:376.8px;top:305px;width:83.19999999999999px;height:38.80000000000001px;background:#fafafa;border:2px solid #5590cc;box-shadow:0 0 0 0.6px #9cc0e4;"></div>
<div class="t" style="left:382.60px;top:313.20px;font-size:8.5px;color:#333;line-height:10px;transform:scaleX(0.748);transform-origin:left;-webkit-text-stroke:0.25px #333;">Bestellung</div>
<div class="t" style="left:382.60px;top:326.30px;font-size:8px;color:#555;line-height:10px;transform:scaleX(0.736);transform-origin:left;">20000210</div>
<svg style="left:0;top:0" width="800" height="600"><g fill="none" stroke="#4a88c8" stroke-width="0.9"><path d="M376.6 249.3H357.6V324.3H353"/><path d="M418.4 268.8V302"/></g>
<path d="M351.8 324.3L355.3 321.8V326.8Z" fill="#4a88c8"/>
<path d="M418.4 305.2L415.9 301.2H420.9Z" fill="#4a88c8"/></svg>
<div class="a" style="left:505.9px;top:149px;width:126.8px;height:31.7px;background:#e6e9ec;"></div>
<div class="t" style="left:517.70px;top:153.20px;font-size:7.5px;color:#30608a;line-height:10px;transform:scaleX(0.791);transform-origin:left;">Optionen</div>
<div class="a" style="left:506.5px;top:168px;width:124.5px;height:10.2px;background:#f8f9fa;"></div>
<svg style="left:0;top:0" width="800" height="600"><circle cx="512.8" cy="173.4" r="2.9" fill="none" stroke="#a9b6c0" stroke-width="0.7"/><circle cx="512.8" cy="173.4" r="2.2" fill="#3e6a90"/>
<circle cx="559.3" cy="173.4" r="2.9" fill="#fff" stroke="#a9b6c0" stroke-width="0.7"/></svg>
<div class="t" style="left:518.20px;top:168.60px;font-size:6.5px;color:#3a3a3a;line-height:10px;transform:scaleX(0.741);transform-origin:left;">Belegbezogen</div>
<div class="t" style="left:564.80px;top:168.60px;font-size:6.5px;color:#3a3a3a;line-height:10px;transform:scaleX(0.748);transform-origin:left;">Positionsbezogen</div>
<div class="a" style="left:505.9px;top:183.2px;width:126.8px;height:90.4px;background:#e6e9ec;"></div>
<div class="t" style="left:517.50px;top:188.30px;font-size:7.5px;color:#30608a;line-height:10px;transform:scaleX(0.763);transform-origin:left;">Einkaufs-Kontrakt</div>
<div class="a" style="left:507.4px;top:202.4px;width:41.3px;height:10.6px;background:#fafafa;"></div>
<div class="a" style="left:557.8px;top:202.4px;width:73.2px;height:10.6px;background:#fafafa;"></div>
<div class="t" style="left:508.00px;top:202.60px;font-size:6.5px;color:#5a5e62;line-height:10px;transform:scaleX(0.738);transform-origin:left;">Nummer</div>
<div class="t" style="left:330.90px;top:203.70px;font-size:6.5px;color:#3a3a3a;line-height:10px;transform:scaleX(0.691);transform-origin:right;width:300px;text-align:right;">18</div>
<div class="a" style="left:507.4px;top:213.98000000000002px;width:41.3px;height:10.6px;background:#fafafa;"></div>
<div class="a" style="left:557.8px;top:213.98000000000002px;width:73.2px;height:10.6px;background:#fafafa;"></div>
<div class="t" style="left:508.00px;top:214.18px;font-size:6.5px;color:#5a5e62;line-height:10px;transform:scaleX(0.757);transform-origin:left;">Datum</div>
<div class="t" style="left:444.40px;top:215.28px;font-size:6.5px;color:#3a3a3a;line-height:10px;transform:scaleX(0.699);transform-origin:center;width:300px;text-align:center;">08.01.2007</div>
<div class="a" style="left:507.4px;top:225.56px;width:41.3px;height:10.6px;background:#fafafa;"></div>
<div class="a" style="left:557.8px;top:225.56px;width:73.2px;height:10.6px;background:#fafafa;"></div>
<div class="t" style="left:508.00px;top:225.76px;font-size:6.5px;color:#5a5e62;line-height:10px;transform:scaleX(0.788);transform-origin:left;">Netto</div>
<div class="t" style="left:330.90px;top:226.86px;font-size:6.5px;color:#3a3a3a;line-height:10px;transform:scaleX(0.702);transform-origin:right;width:300px;text-align:right;">10.000,00</div>
<div class="a" style="left:507.4px;top:237.14000000000001px;width:41.3px;height:10.6px;background:#fafafa;"></div>
<div class="a" style="left:557.8px;top:237.14000000000001px;width:73.2px;height:10.6px;background:#fafafa;"></div>
<div class="t" style="left:508.00px;top:237.34px;font-size:6.5px;color:#5a5e62;line-height:10px;transform:scaleX(0.807);transform-origin:left;">Brutto</div>
<div class="t" style="left:330.90px;top:238.44px;font-size:6.5px;color:#3a3a3a;line-height:10px;transform:scaleX(0.714);transform-origin:right;width:300px;text-align:right;">11.600,00</div>
<div class="a" style="left:507.4px;top:248.72px;width:41.3px;height:10.6px;background:#fafafa;"></div>
<div class="a" style="left:557.8px;top:248.72px;width:73.2px;height:10.6px;background:#fafafa;"></div>
<div class="t" style="left:508.00px;top:248.92px;font-size:6.5px;color:#5a5e62;line-height:10px;transform:scaleX(0.740);transform-origin:left;">Status</div>
<div class="t" style="left:558.60px;top:250.72px;font-size:6.5px;color:#3a3a3a;line-height:10px;transform:scaleX(0.782);transform-origin:left;">teil</div>
<div class="a" style="left:507.4px;top:260.3px;width:41.3px;height:10.6px;background:#fafafa;"></div>
<div class="a" style="left:557.8px;top:260.3px;width:73.2px;height:10.6px;background:#fafafa;"></div>
<div class="t" style="left:508.00px;top:260.50px;font-size:6.5px;color:#5a5e62;line-height:10px;transform:scaleX(0.749);transform-origin:left;">Druckstatus</div>
<div class="t" style="left:558.60px;top:262.30px;font-size:6.5px;color:#3a3a3a;line-height:10px;transform:scaleX(0.778);transform-origin:left;">nicht gedruckt</div>
<div class="a" style="left:505.9px;top:277px;width:126.8px;height:66.5px;background:#e6e9ec;"></div>
<div class="t" style="left:517.50px;top:281.50px;font-size:7.5px;color:#30608a;line-height:10px;transform:scaleX(0.756);transform-origin:left;">Geschäftspartner</div>
<div class="a" style="left:507.4px;top:296px;width:41.3px;height:11px;background:#fafafa;"></div>
<div class="a" style="left:557.8px;top:296px;width:73.2px;height:11px;background:#fafafa;"></div>
<div class="a" style="left:507.4px;top:307.6px;width:41.3px;height:34.2px;background:#fafafa;"></div>
<div class="a" style="left:557.8px;top:307.6px;width:73.8px;height:34.2px;background:#c3ddf3;"></div>
<div class="t" style="left:508.00px;top:296.50px;font-size:6.5px;color:#5a5e62;line-height:10px;transform:scaleX(0.738);transform-origin:left;">Nummer</div>
<div class="t" style="left:330.40px;top:296.50px;font-size:6.5px;color:#555;line-height:10px;transform:scaleX(0.708);transform-origin:right;width:300px;text-align:right;">72029</div>
<div class="t" style="left:508.00px;top:307.80px;font-size:6.5px;color:#5a5e62;line-height:10px;transform:scaleX(0.706);transform-origin:left;">Name</div>
<div class="t" style="left:559.50px;top:307.60px;font-size:6.5px;color:#3a3a3a;line-height:10px;transform:scaleX(0.696);transform-origin:left;">Acco Platen GmbH</div>
<div class="t" style="left:559.50px;top:315.60px;font-size:6.5px;color:#3a3a3a;line-height:10px;transform:scaleX(0.754);transform-origin:left;">test</div>
<svg style="left:0;top:0" width="800" height="600"><path d="M551.6 205.9L554.5 208.5L551.6 211.1Z" fill="#2a6fd0"/><path d="M551.6 298.9L554.5 301.5L551.6 304.1Z" fill="#2a6fd0"/>
<g fill="none"><circle cx="512.2" cy="158" r="4.4" stroke="#7f9cb6" stroke-width="0.8"/><path d="M510.5 159.2L512.2 157.3L513.9 159.2" stroke="#30608a" stroke-width="0.9"/>
<circle cx="512.2" cy="193.1" r="4.4" stroke="#7f9cb6" stroke-width="0.8"/><path d="M510.5 194.3L512.2 192.4L513.9 194.3" stroke="#30608a" stroke-width="0.9"/>
<circle cx="512.2" cy="286.3" r="4.4" stroke="#7f9cb6" stroke-width="0.8"/><path d="M510.5 287.5L512.2 285.6L513.9 287.5" stroke="#30608a" stroke-width="0.9"/></g></svg>
<div class="a" style="left:435px;top:478px;width:1.2px;height:108.5px;background:#c6c9ca;"></div>
<div class="a" style="left:617.2px;top:478px;width:1.2px;height:108.5px;background:#c6c9ca;"></div>
<svg style="left:0;top:0" width="800" height="600"><ellipse cx="7" cy="596" rx="1.6" ry="1.8" fill="#3da843"/>
<path d="M22 598.5Q22.5 597.5 22.8 595Q23.3 592.2 24.2 592.2Q25.1 592.2 25.6 595Q25.9 597.5 26.6 598.5Z" fill="#3da843"/><rect x="23.8" y="598.5" width="0.9" height="1.5" fill="#3da843"/></svg>
</body></html>
